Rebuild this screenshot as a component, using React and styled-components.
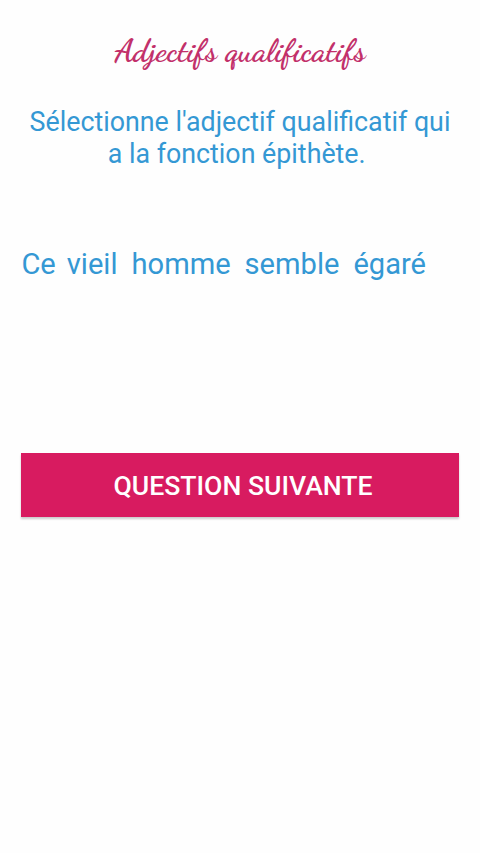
import React from 'react'
import styled, { createGlobalStyle } from 'styled-components'

const words = [
  { text: 'Ce', gap: 11 },
  { text: 'vieil', gap: 14 },
  { text: 'homme', gap: 14 },
  { text: 'semble', gap: 14 },
  { text: 'égaré', gap: 0 },
]

export default function App() {
  return (
    <>
      <GlobalStyle />
      <Screen>
        <Title>Adjectifs qualificatifs</Title>
        <Question>
          Sélectionne l'adjectif qualificatif qui
          <br />a la fonction épithète.&nbsp;
        </Question>
        <Sentence>
          {words.map(({ text, gap }) => (
            <Word key={text} $gap={gap}>{text}</Word>
          ))}
        </Sentence>
        <NextButton>Question suivante</NextButton>
      </Screen>
    </>
  )
}

const GlobalStyle = createGlobalStyle`
  * {
    box-sizing: border-box;
  }
  body {
    margin: 0;
    background: #fefefe;
  }
`;

const Screen = styled.main`
  display: flex;
  flex-direction: column;
  height: 853px;
  padding: 31px 21px 0;
  overflow: hidden;
  font-family: Roboto, sans-serif;
  color: #3498d4;
`;

const Title = styled.h1`
  margin: 0;
  height: 40px;
  line-height: 40px;
  font-family: "Dancing Script", cursive;
  font-size: 32.2px;
  font-weight: 700;
  text-align: center;
  color: #c2306a;
`;

const Question = styled.p`
  margin: 35px 0 0;
  font-size: 26.8px;
  line-height: 32px;
  text-align: center;
  white-space: nowrap;
`;

const Sentence = styled.div`
  display: flex;
  margin-top: 76px;
  height: 36px;
  padding-left: 0.4px;
  font-size: 29.1px;
  line-height: 36px;
`;

const Word = styled.span`
  margin-right: ${({ $gap }) => $gap}px;
`;

const NextButton = styled.button`
  margin-top: 171px;
  height: 64px;
  padding: 0 0 0 6px;
  border: none;
  background: #d81b60;
  box-shadow: 0 2px 2px rgba(0, 0, 0, 0.2);
  font-family: Roboto, sans-serif;
  font-size: 26.6px;
  font-weight: 500;
  text-transform: uppercase;
  color: #fff;
`;
